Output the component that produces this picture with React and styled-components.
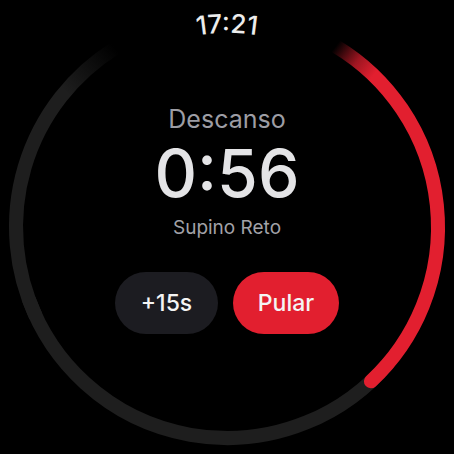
import React from "react";
import styled, { createGlobalStyle } from "styled-components";

const CX = 227;
const CY = 227;
const R = 211;

const pt = (deg, r = R) => {
  const a = (deg * Math.PI) / 180;
  return [CX + r * Math.sin(a), CY - r * Math.cos(a)];
};

const arc = (from, to, r = R) => {
  const [x1, y1] = pt(from, r);
  const [x2, y2] = pt(to, r);
  const large = to - from > 180 ? 1 : 0;
  return `M ${x1} ${y1} A ${r} ${r} 0 ${large} 1 ${x2} ${y2}`;
};

const GlobalStyle = createGlobalStyle`
  html, body {
    margin: 0;
    padding: 0;
    background: #000;
  }
  body {
    font-family: Inter, Roboto, "Noto Sans", sans-serif;
  }
`;

const Screen = styled.div`
  width: 454px;
  height: 454px;
  display: grid;
  background: #000;
  overflow: hidden;
  > * {
    grid-area: 1 / 1;
  }
`;

const Ring = styled.svg`
  width: 454px;
  height: 454px;
  display: block;
`;

const Content = styled.div`
  display: flex;
  flex-direction: column;
  align-items: center;
`;

const Clock = styled.svg`
  width: 454px;
  height: 44px;
  display: block;
  text {
    font-family: Inter, Roboto, sans-serif;
    font-size: 26px;
    font-weight: 500;
    fill: #ececec;
  }
`;

const Label = styled.div`
  margin-top: 60px;
  font-size: 25px;
  line-height: 30px;
  color: #9d9da4;
`;

const Timer = styled.div`
  margin-top: 6px;
  font-size: 66px;
  line-height: 66px;
  font-weight: 500;
  color: #e4e4e6;
`;

const Exercise = styled.div`
  margin-top: 11px;
  font-size: 19px;
  line-height: 22px;
  color: #a2a2a8;
`;

const Actions = styled.div`
  margin-top: 33px;
  display: flex;
  gap: 15px;
`;

const Pill = styled.button`
  width: ${(p) => p.$w}px;
  height: 62px;
  border: none;
  border-radius: 31px;
  background: ${(p) => (p.$primary ? "#e21f2f" : "#1c1c21")};
  color: #f4f4f4;
  font-family: Inter, Roboto, sans-serif;
  font-size: 23px;
  font-weight: 500;
  padding: 0;
`;

const clockPath = (() => {
  const r = 194;
  const a = (70 * Math.PI) / 180;
  const x1 = CX - r * Math.sin(a);
  const y1 = CY - r * Math.cos(a);
  const x2 = CX + r * Math.sin(a);
  return `M ${x1} ${y1} A ${r} ${r} 0 0 1 ${x2} ${y1}`;
})();

export default function App() {
  const [rx1, ry1] = pt(31);
  const [rx2, ry2] = pt(44);
  const [gx1, gy1] = pt(328);
  const [gx2, gy2] = pt(310);

  return (
    <>
      <GlobalStyle />
      <Screen>
        <Ring viewBox="0 0 454 454">
          <defs>
            <linearGradient id="redFade" gradientUnits="userSpaceOnUse" x1={rx1} y1={ry1} x2={rx2} y2={ry2}>
              <stop offset="0" stopColor="#e21f2f" stopOpacity="0" />
              <stop offset="0.55" stopColor="#e21f2f" stopOpacity="0.7" />
              <stop offset="1" stopColor="#e21f2f" stopOpacity="1" />
            </linearGradient>
            <linearGradient id="grayFade" gradientUnits="userSpaceOnUse" x1={gx1} y1={gy1} x2={gx2} y2={gy2}>
              <stop offset="0" stopColor="#1e1e1e" stopOpacity="0" />
              <stop offset="1" stopColor="#1e1e1e" stopOpacity="1" />
            </linearGradient>
          </defs>
          <path d={arc(130, 250)} fill="none" stroke="#1e1e1e" strokeWidth="14" />
          <path d={arc(245, 328)} fill="none" stroke="url(#grayFade)" strokeWidth="14" />
          <path d={arc(31, 137)} fill="none" stroke="url(#redFade)" strokeWidth="14" strokeLinecap="round" />
        </Ring>
        <Content>
          <Clock viewBox="0 0 454 44">
            <path id="clockArc" d={clockPath} fill="none" />
            <text textAnchor="middle">
              <textPath href="#clockArc" startOffset="50%">
                17:21
              </textPath>
            </text>
          </Clock>
          <Label>Descanso</Label>
          <Timer>0:56</Timer>
          <Exercise>Supino Reto</Exercise>
          <Actions>
            <Pill $w={103}>+15s</Pill>
            <Pill $w={106} $primary>
              Pular
            </Pill>
          </Actions>
        </Content>
      </Screen>
    </>
  );
}
